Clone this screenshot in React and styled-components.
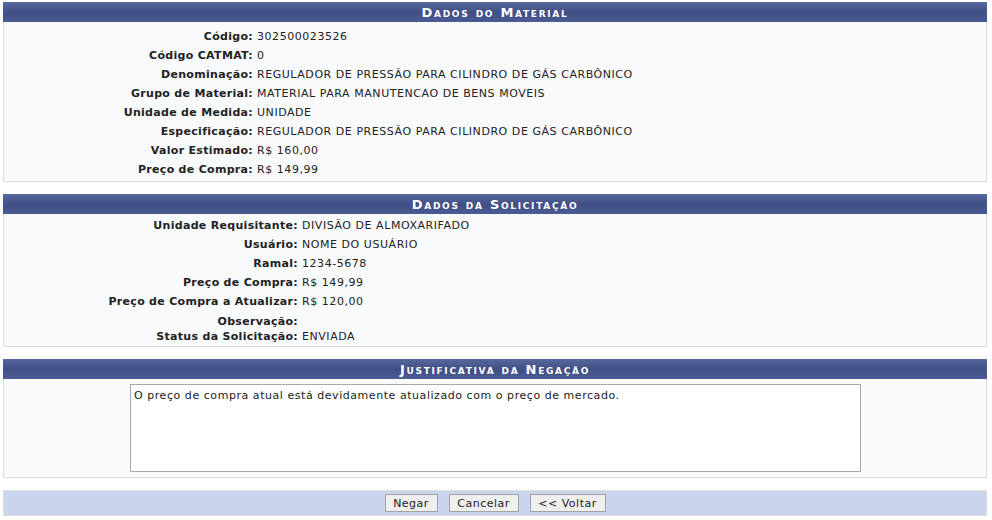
import React from 'react'
import styled, { createGlobalStyle } from 'styled-components'

const GlobalStyle = createGlobalStyle`
  body {
    margin: 0;
    background: #fff;
    font-family: "DejaVu Sans", Verdana, sans-serif;
    font-size: 11px;
    color: #222;
  }
`

const Page = styled.div`
  padding: 2px 5px 0 3px;
  width: 984px;
`

const Panel = styled.section`
  margin-bottom: 12px;
`

const Header = styled.div`
  height: 20px;
  display: flex;
  align-items: center;
  justify-content: center;
  background: linear-gradient(#58679c, #3f4e84 55%, #4d5c93);
  color: #fff;
  font-weight: bold;
  font-variant: small-caps;
  font-size: 13px;
  letter-spacing: 1.7px;
  padding-top: 1px;
  box-sizing: border-box;
`

const Body = styled.div`
  background: #f9fafc;
  border: 1px solid #dcdcdc;
  border-top: none;
  padding: ${p => p.$pad || '0'};
`

const Row = styled.div`
  display: flex;
  align-items: flex-start;
  line-height: 14px;
  height: ${p => (p.$short ? '16px' : '19px')};
  padding-top: ${p => (p.$short ? '5px' : '4px')};
  box-sizing: border-box;
`

const Label = styled.div`
  width: ${p => p.$w}px;
  text-align: right;
  font-weight: bold;
  letter-spacing: 0.3px;
  padding-right: 4px;
  box-sizing: border-box;
`

const Value = styled.div`
  color: #222;
  letter-spacing: 0.55px;
`

const TextArea = styled.textarea`
  display: block;
  margin-left: 126px;
  width: 731px;
  height: 88px;
  box-sizing: border-box;
  border: 1px solid #a9a9a9;
  background: #fff;
  padding: 4px 3px;
  font-family: "DejaVu Sans", Verdana, sans-serif;
  font-size: 11px;
  letter-spacing: 0.55px;
  color: #222;
  resize: none;
`

const Footer = styled.div`
  height: 24px;
  background: #c8d5ec;
  border: 1px solid #dcdcdc;
  display: flex;
  justify-content: center;
  align-items: center;
  gap: 11px;
`

const Button = styled.button`
  width: ${p => p.$w}px;
  height: 18px;
  padding: 0;
  background: #efefef;
  border: 1px solid #a3a3a3;
  font-family: "DejaVu Sans", Verdana, sans-serif;
  font-size: 11px;
  letter-spacing: 0.5px;
  color: #222;
  border-radius: 0;
`

const material = [
  ['Código:', '302500023526'],
  ['Código CATMAT:', '0'],
  ['Denominação:', 'REGULADOR DE PRESSÃO PARA CILINDRO DE GÁS CARBÔNICO'],
  ['Grupo de Material:', 'MATERIAL PARA MANUTENCAO DE BENS MOVEIS'],
  ['Unidade de Medida:', 'UNIDADE'],
  ['Especificação:', 'REGULADOR DE PRESSÃO PARA CILINDRO DE GÁS CARBÔNICO'],
  ['Valor Estimado:', 'R$ 160,00'],
  ['Preço de Compra:', 'R$ 149,99'],
]

const solicitacao = [
  ['Unidade Requisitante:', 'DIVISÃO DE ALMOXARIFADO'],
  ['Usuário:', 'NOME DO USUÁRIO'],
  ['Ramal:', '1234-5678'],
  ['Preço de Compra:', 'R$ 149,99'],
  ['Preço de Compra a Atualizar:', 'R$ 120,00'],
  ['Observação:', ''],
  ['Status da Solicitação:', 'ENVIADA'],
]

const App = () => {
  return (
    <Page>
      <GlobalStyle />
      <Panel>
        <Header>Dados do Material</Header>
        <Body $pad="4px 0 3px">
          {material.map(([l, v]) => (
            <Row key={l}>
              <Label $w={253}>{l}</Label>
              <Value>{v}</Value>
            </Row>
          ))}
        </Body>
      </Panel>
      <Panel>
        <Header>Dados da Solicitação</Header>
        <Body $pad="1px 0 1px">
          {solicitacao.map(([l, v]) => (
            <Row key={l} $short={!v}>
              <Label $w={298}>{l}</Label>
              <Value>{v}</Value>
            </Row>
          ))}
        </Body>
      </Panel>
      <Panel>
        <Header>Justificativa da Negação</Header>
        <Body $pad="5px 0 5px">
          <TextArea
            readOnly
            defaultValue="O preço de compra atual está devidamente atualizado com o preço de mercado."
          />
        </Body>
      </Panel>
      <Footer>
        <Button $w={53}>Negar</Button>
        <Button $w={70}>Cancelar</Button>
        <Button $w={76}>&lt;&lt; Voltar</Button>
      </Footer>
    </Page>
  )
}

export default App
